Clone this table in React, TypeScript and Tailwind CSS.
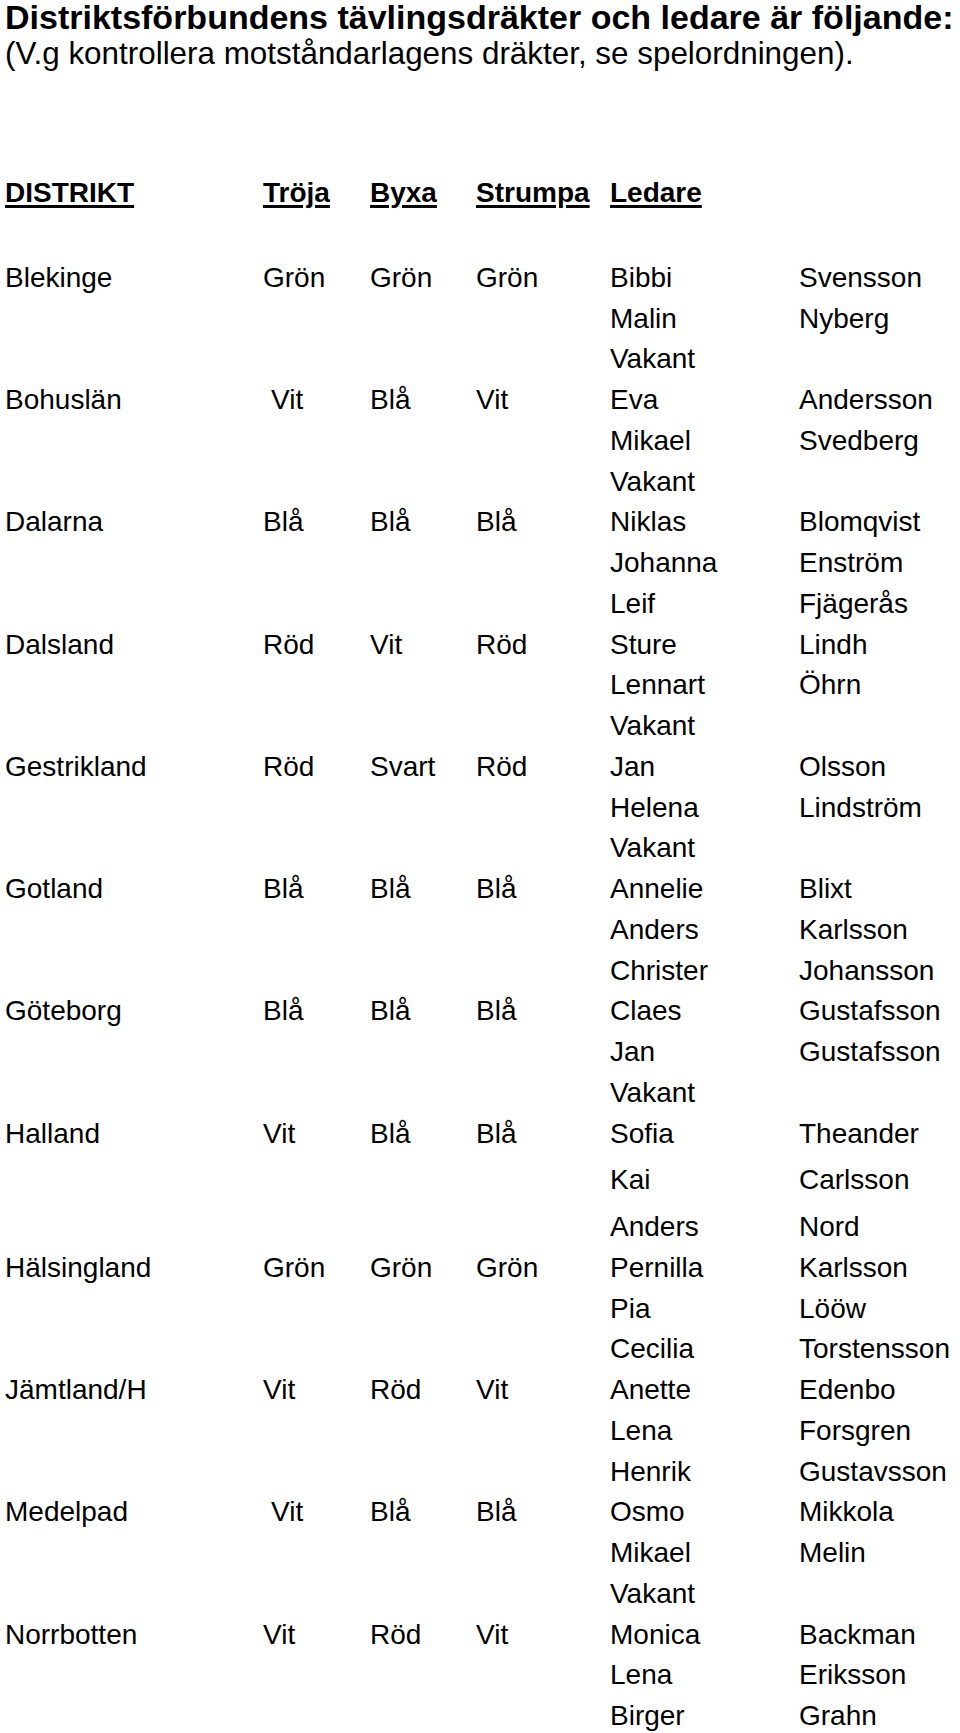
import React from "react";

type Leader = [string, string, string?];
type Group = {
  district: string;
  troja: string;
  byxa: string;
  strumpa: string;
  trojaIndent?: boolean;
  leaders: Leader[];
};

const groups: Group[] = [
  { district: "Blekinge", troja: "Grön", byxa: "Grön", strumpa: "Grön", leaders: [["Bibbi", "Svensson"], ["Malin", "Nyberg"], ["Vakant", ""]] },
  { district: "Bohuslän", troja: "Vit", byxa: "Blå", strumpa: "Vit", trojaIndent: true, leaders: [["Eva", "Andersson"], ["Mikael", "Svedberg"], ["Vakant", ""]] },
  { district: "Dalarna", troja: "Blå", byxa: "Blå", strumpa: "Blå", leaders: [["Niklas", "Blomqvist"], ["Johanna", "Enström"], ["Leif", "Fjägerås"]] },
  { district: "Dalsland", troja: "Röd", byxa: "Vit", strumpa: "Röd", leaders: [["Sture", "Lindh"], ["Lennart", "Öhrn"], ["Vakant", ""]] },
  { district: "Gestrikland", troja: "Röd", byxa: "Svart", strumpa: "Röd", leaders: [["Jan", "Olsson"], ["Helena", "Lindström"], ["Vakant", ""]] },
  { district: "Gotland", troja: "Blå", byxa: "Blå", strumpa: "Blå", leaders: [["Annelie", "Blixt"], ["Anders", "Karlsson"], ["Christer", "Johansson"]] },
  { district: "Göteborg", troja: "Blå", byxa: "Blå", strumpa: "Blå", leaders: [["Claes", "Gustafsson"], ["Jan", "Gustafsson"], ["Vakant", ""]] },
  { district: "Halland", troja: "Vit", byxa: "Blå", strumpa: "Blå", leaders: [["Sofia", "Theander"], ["Kai", "Carlsson", "gap"], ["Anders", "Nord", "gap"]] },
  { district: "Hälsingland", troja: "Grön", byxa: "Grön", strumpa: "Grön", leaders: [["Pernilla", "Karlsson"], ["Pia", "Lööw"], ["Cecilia", "Torstensson"]] },
  { district: "Jämtland/H", troja: "Vit", byxa: "Röd", strumpa: "Vit", leaders: [["Anette", "Edenbo"], ["Lena", "Forsgren"], ["Henrik", "Gustavsson"]] },
  { district: "Medelpad", troja: "Vit", byxa: "Blå", strumpa: "Blå", trojaIndent: true, leaders: [["Osmo", "Mikkola"], ["Mikael", "Melin"], ["Vakant", ""]] },
  { district: "Norrbotten", troja: "Vit", byxa: "Röd", strumpa: "Vit", leaders: [["Monica", "Backman"], ["Lena", "Eriksson"], ["Birger", "Grahn"]] },
];

const gridCols = "grid grid-cols-[258px_107px_106px_134px_189px_1fr] whitespace-nowrap";

export default function App() {
  return (
    <div className="min-h-[1733px] w-[960px] bg-white pl-[5px] text-black font-['Liberation_Sans',Arial,Helvetica,sans-serif]">
      <h1 className="whitespace-nowrap text-[34px] font-bold leading-[35px]">
        Distriktsförbundens tävlingsdräkter och ledare är följande:
      </h1>
      <p className="whitespace-nowrap text-[31.4px] leading-[38px]">
        (V.g kontrollera motståndarlagens dräkter, se spelordningen).
      </p>

      <div className={`${gridCols} mt-[100px] text-[28px] font-bold leading-[40.75px]`}>
        {["DISTRIKT", "Tröja", "Byxa", "Strumpa", "Ledare"].map((h) => (
          <div key={h}>
            <span className="underline decoration-[3px] underline-offset-[3px]">{h}</span>
          </div>
        ))}
        <div />
      </div>

      <div className="mt-[44px] text-[28px] leading-[40.75px]">
        {groups.map((g) =>
          g.leaders.map((l, i) => (
            <div key={g.district + i} className={`${gridCols} ${l[2] ? "pt-[6px]" : ""}`}>
              <div>{i === 0 ? g.district : ""}</div>
              <div className={i === 0 && g.trojaIndent ? "pl-[8px]" : ""}>{i === 0 ? g.troja : ""}</div>
              <div>{i === 0 ? g.byxa : ""}</div>
              <div>{i === 0 ? g.strumpa : ""}</div>
              <div>{l[0]}</div>
              <div>{l[1]}</div>
            </div>
          ))
        )}
      </div>
    </div>
  );
}
